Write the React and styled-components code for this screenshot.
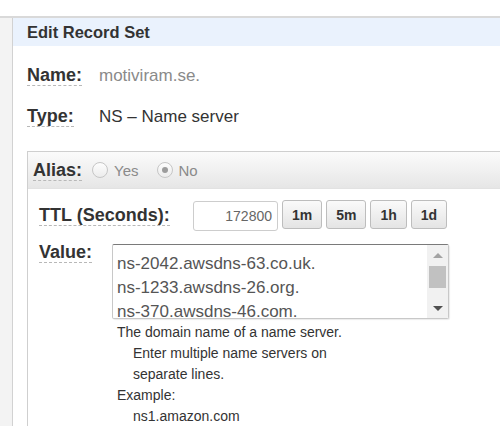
import React from "react";
import styled, { createGlobalStyle } from "styled-components";

const GlobalStyle = createGlobalStyle`
  html, body {
    margin: 0;
    padding: 0;
    background: #fff;
  }

  body {
    font-family: "Liberation Sans", Arial, sans-serif;
    color: #333;
  }
`;

const Page = styled.div`
  height: 426px;
  padding-top: 16px;
  box-sizing: border-box;
  overflow: hidden;
`;

const Frame = styled.div`
  display: flex;
  height: 100%;
  border-top: 2px solid #d9d9d9;
`;

const SideRail = styled.div`
  width: 12px;
  background: #f3f3f3;
  border-right: 1px solid #d2d2d2;
`;

const Panel = styled.div`
  flex: 1;
  display: flex;
  flex-direction: column;
  min-width: 0;
`;

const PanelTitle = styled.div`
  height: 28px;
  line-height: 28px;
  padding-left: 14px;
  background: #eaf2fd;
  font-size: 16.5px;
  font-weight: bold;
  color: #333;
`;

const InfoList = styled.div`
  padding: 9px 0 0 14px;
`;

const InfoRow = styled.div`
  display: flex;
  align-items: center;
  height: 41px;
`;

const LabelCell = styled.div`
  width: ${(props) => props.$width}px;
  flex-shrink: 0;
`;

const FieldLabel = styled.span`
  display: inline-block;
  font-size: 18px;
  font-weight: bold;
  line-height: 20px;
  color: #333;
  border-bottom: 1px dashed #b8b8b8;
`;

const InfoValue = styled.span`
  font-size: 17px;
  color: ${(props) => (props.$muted ? "#8a8a8a" : "#333")};
`;

const AliasBox = styled.div`
  flex: 1;
  margin: 14px 0 0 14px;
  border-top: 1px solid #cfcfcf;
  border-left: 1px solid #cfcfcf;
`;

const AliasBar = styled.div`
  display: flex;
  align-items: center;
  height: 36px;
  padding-left: 5px;
  background: linear-gradient(#fbfbfb, #e6e6e6);
  border-bottom: 1px solid #e2e2e2;

  ${FieldLabel} {
    margin-right: 10px;
  }
`;

const RadioOption = styled.label`
  display: flex;
  align-items: center;
  gap: 6px;
  margin-right: 18px;
  font-size: 15px;
  color: #8a8a8a;
`;

const Radio = styled.span`
  position: relative;
  width: 14px;
  height: 14px;
  border-radius: 50%;
  border: 1px solid #c6c6c6;
  background: linear-gradient(#fdfdfd, #ececec);

  &::after {
    content: "";
    display: ${(props) => (props.$checked ? "block" : "none")};
    position: absolute;
    left: 4px;
    top: 4px;
    width: 6px;
    height: 6px;
    border-radius: 50%;
    background: #9c9c9c;
  }
`;

const FormBody = styled.div`
  padding: 11px 0 0 11px;
`;

const TtlRow = styled.div`
  display: flex;
  align-items: center;
  height: 31px;
`;

const TtlInput = styled.div`
  width: 85px;
  height: 30px;
  box-sizing: border-box;
  padding-right: 5px;
  border: 1px solid #cdcdcd;
  border-radius: 3px;
  font-size: 14px;
  line-height: 28px;
  text-align: right;
  color: #666;
`;

const PresetGroup = styled.div`
  display: flex;
  gap: 4px;
  margin-left: 4px;
  align-self: flex-start;
`;

const PresetButton = styled.button`
  height: 29px;
  padding: 0 9px;
  border: 1px solid #bdbdbd;
  border-radius: 3px;
  background: linear-gradient(#fafafa, #e4e4e4);
  font-family: inherit;
  font-size: 14px;
  font-weight: bold;
  color: #333;
`;

const ValueRow = styled.div`
  display: flex;
  align-items: flex-start;
  margin-top: 11px;
`;

const ValueBox = styled.div`
  display: flex;
  width: 337px;
  height: 75px;
  margin-top: 2px;
  box-sizing: border-box;
  border: 1px solid #c8c8c8;
  border-top-color: #7a7a7a;
  border-radius: 2px;
  box-shadow: 1px 1px 1px rgba(0, 0, 0, 0.08);
  overflow: hidden;
`;

const ValueLines = styled.div`
  flex: 1;
  padding: 7px 0 0 4px;
  font-size: 17px;
  line-height: 24px;
  color: #555;
  white-space: pre;
  overflow: hidden;
`;

const ScrollTrack = styled.div`
  display: flex;
  flex-direction: column;
  width: 21px;
  background: #f1f1f1;
`;

const ScrollArrow = styled.div`
  height: 20px;
  display: flex;
  align-items: center;
  justify-content: center;

  &::before {
    content: "";
    border-left: 5px solid transparent;
    border-right: 5px solid transparent;
    ${(props) =>
      props.$down
        ? "border-top: 5px solid #505050;"
        : "border-bottom: 5px solid #a3a3a3;"}
  }
`;

const ScrollThumb = styled.div`
  height: 22px;
  margin: 1px 2px 0;
  background: #c1c1c1;
`;

const ScrollGap = styled.div`
  flex: 1;
`;

const HelpText = styled.div`
  margin: 3px 0 0 78px;
  font-size: 14px;
  line-height: 21px;
  color: #333;
`;

const HelpLine = styled.div`
  padding-left: ${(props) => (props.$indent ? 16 : 0)}px;
`;

const presets = ["1m", "5m", "1h", "1d"];

const nameServers = [
  "ns-2042.awsdns-63.co.uk.",
  "ns-1233.awsdns-26.org.",
  "ns-370.awsdns-46.com.",
];

export default function App() {
  return (
    <>
      <GlobalStyle />
      <Page>
        <Frame>
          <SideRail />
          <Panel>
            <PanelTitle>Edit Record Set</PanelTitle>

            <InfoList>
              <InfoRow>
                <LabelCell $width={72}>
                  <FieldLabel>Name:</FieldLabel>
                </LabelCell>
                <InfoValue $muted>motiviram.se.</InfoValue>
              </InfoRow>
              <InfoRow>
                <LabelCell $width={72}>
                  <FieldLabel>Type:</FieldLabel>
                </LabelCell>
                <InfoValue>NS – Name server</InfoValue>
              </InfoRow>
            </InfoList>

            <AliasBox>
              <AliasBar>
                <FieldLabel>Alias:</FieldLabel>
                <RadioOption>
                  <Radio />
                  Yes
                </RadioOption>
                <RadioOption>
                  <Radio $checked />
                  No
                </RadioOption>
              </AliasBar>

              <FormBody>
                <TtlRow>
                  <LabelCell $width={154}>
                    <FieldLabel>TTL (Seconds):</FieldLabel>
                  </LabelCell>
                  <TtlInput>172800</TtlInput>
                  <PresetGroup>
                    {presets.map((p) => (
                      <PresetButton key={p}>{p}</PresetButton>
                    ))}
                  </PresetGroup>
                </TtlRow>

                <ValueRow>
                  <LabelCell $width={73}>
                    <FieldLabel>Value:</FieldLabel>
                  </LabelCell>
                  <ValueBox>
                    <ValueLines>{nameServers.join("\n")}</ValueLines>
                    <ScrollTrack>
                      <ScrollArrow />
                      <ScrollThumb />
                      <ScrollGap />
                      <ScrollArrow $down />
                    </ScrollTrack>
                  </ValueBox>
                </ValueRow>

                <HelpText>
                  <HelpLine>The domain name of a name server.</HelpLine>
                  <HelpLine $indent>Enter multiple name servers on</HelpLine>
                  <HelpLine $indent>separate lines.</HelpLine>
                  <HelpLine>Example:</HelpLine>
                  <HelpLine $indent>ns1.amazon.com</HelpLine>
                </HelpText>
              </FormBody>
            </AliasBox>
          </Panel>
        </Frame>
      </Page>
    </>
  );
}
